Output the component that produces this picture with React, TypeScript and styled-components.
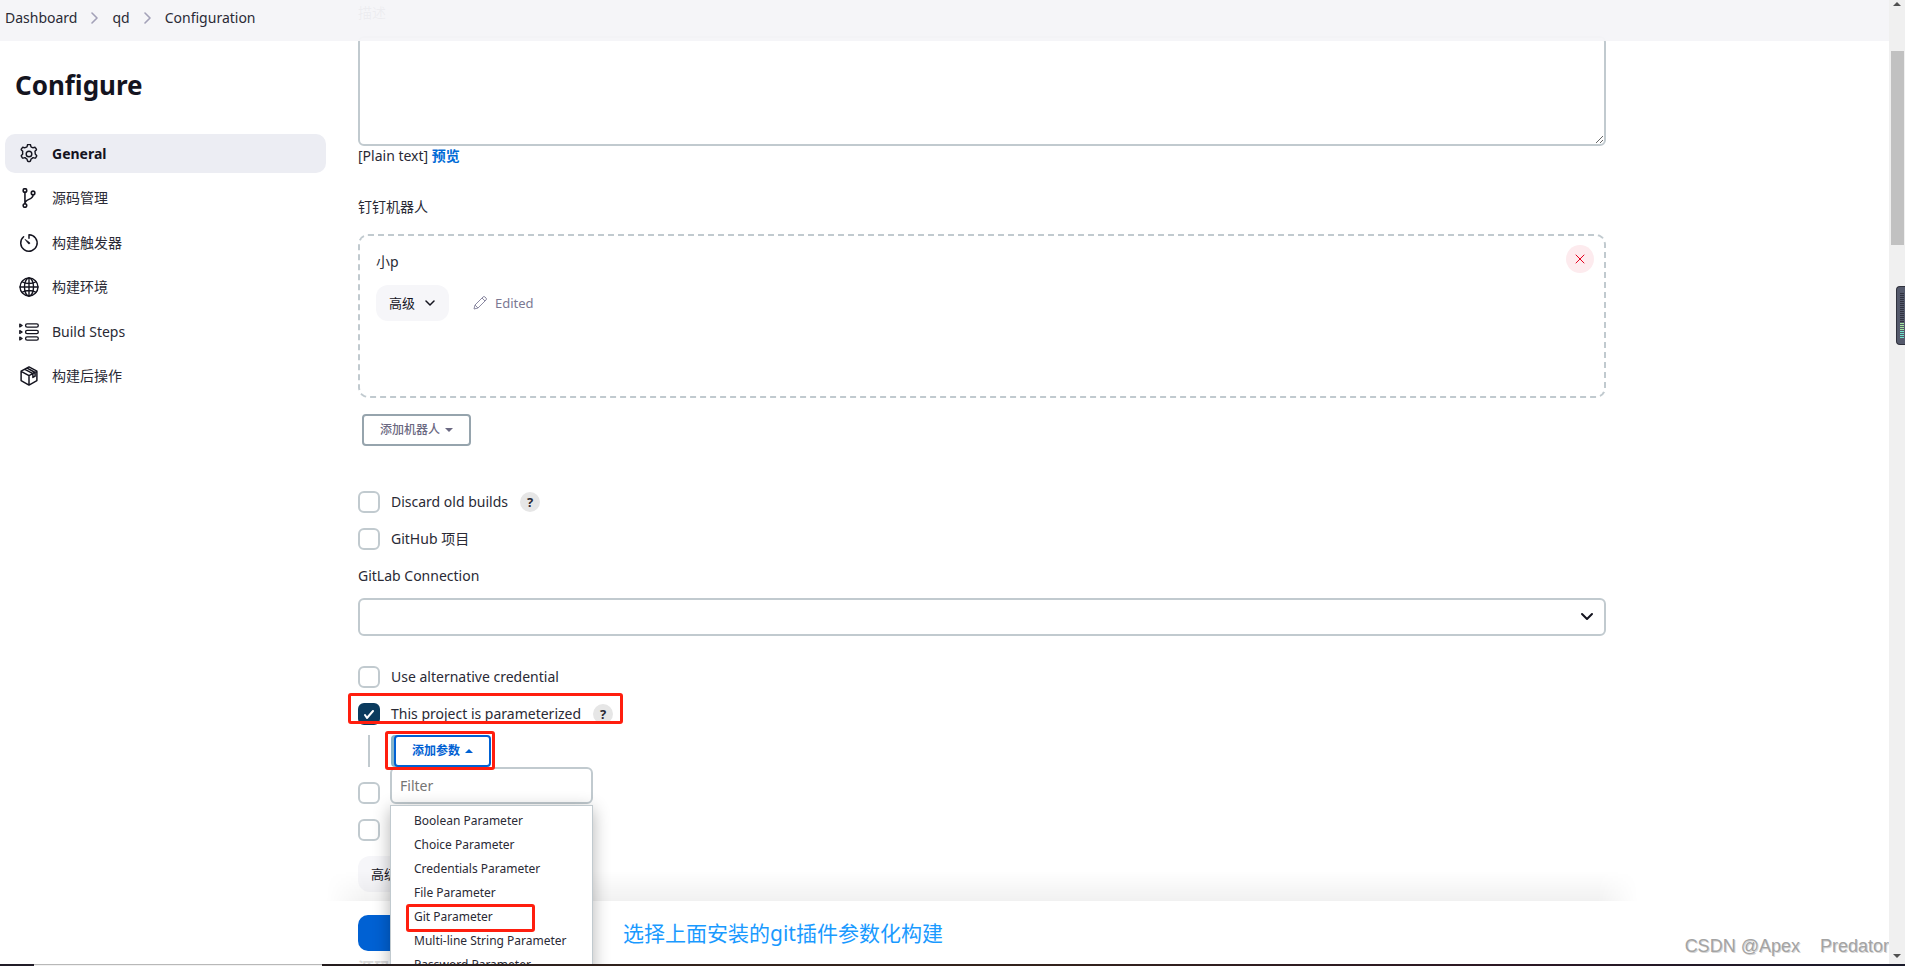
import React from "react";
import styled, { createGlobalStyle, css } from "styled-components";

const ink = "#14141f";
const text = "#2a2a35";
const line = "#c1cacf";

const GlobalStyle = createGlobalStyle`
  *, *::before, *::after { box-sizing: border-box; }
  body {
    margin: 0;
    color: ${text};
    background: #fff;
    font-family: "Noto Sans", "Noto Sans CJK SC", sans-serif;
    font-size: 14px;
    line-height: 22px;
  }
  button, input, select, textarea { font: inherit; color: inherit; margin: 0; }
  a { color: inherit; text-decoration: none; }
`;

const Window = styled.div`
  display: flex;
  flex-direction: column;
  height: 100vh;
  overflow: hidden;
`;
const Body = styled.div`
  display: flex;
  flex: 1;
  min-height: 0;
`;
const Viewport = styled.div`
  position: relative;
  display: flex;
  flex: 1;
  min-width: 0;
  overflow: hidden;
`;

const Header = styled.nav`
  position: absolute;
  z-index: 5;
  inset: 0 0 auto 0;
  height: 41px;
  padding: 0 5px 6px;
  display: flex;
  align-items: center;
  gap: 14px;
  background: rgba(245, 245, 248, 0.96);
  svg { color: #a3a1b8; }
`;

const Sidebar = styled.aside`
  flex: 0 0 326px;
  padding: 66px 0 0 5px;
`;
const Title = styled.h1`
  margin: 0 0 30px 10px;
  font-size: 26px;
  line-height: 38px;
  font-weight: 700;
  color: ${ink};
`;
const Nav = styled.nav`
  display: flex;
  flex-direction: column;
  justify-content: space-between;
  height: 262px;
`;
const NavItem = styled.a<{ $active?: boolean }>`
  display: flex;
  align-items: center;
  gap: 13px;
  height: 39px;
  padding-left: 14px;
  border-radius: 10px;
  ${(p) => p.$active && css`background: #ecedf3; font-weight: 700; color: ${ink};`}
  svg { flex: none; }
`;

const Main = styled.main`
  position: relative;
  flex: 1;
  min-width: 0;
  max-width: 1248px;
  margin: 0 32px;
  padding-top: 2px;
`;
const Label = styled.label`
  display: block;
  height: 22px;
`;
const DescriptionBox = styled.textarea`
  display: block;
  width: 100%;
  height: 110px;
  margin-top: 12px;
  border: 2px solid ${line};
  border-radius: 6px;
  background: #fff;
  outline: none;
  resize: vertical;
`;
const FormatRow = styled.div`
  height: 20px;
  line-height: 20px;
  margin-bottom: 30px;
  a { color: #006bd6; font-weight: 700; }
`;
const RobotCard = styled.section`
  position: relative;
  min-height: 164px;
  margin-top: 16px;
  padding: 16px;
  border: 2px dashed ${line};
  border-radius: 10px;
`;
const RobotName = styled.div`
  height: 20px;
  line-height: 20px;
  margin-bottom: 13px;
`;
const Row = styled.div`
  display: flex;
  align-items: center;
  gap: 24px;
`;
const SoftButton = styled.button`
  display: flex;
  align-items: center;
  gap: 10px;
  height: 36px;
  padding: 0 14px 0 13px;
  border: 0;
  border-radius: 12px;
  background: #f6f6f9;
  font-size: 13px;
  color: ${ink};
`;
const Edited = styled.span`
  display: flex;
  align-items: center;
  gap: 8px;
  color: #7b7993;
  font-size: 13px;
`;
const RemoveButton = styled.button`
  position: absolute;
  top: 9px;
  right: 10px;
  display: grid;
  place-items: center;
  width: 28px;
  height: 28px;
  padding: 0;
  border: 0;
  border-radius: 50%;
  background: #fdebee;
  color: #e6001f;
`;
const OutlineButton = styled.button<{ $open?: boolean }>`
  display: flex;
  align-items: center;
  justify-content: center;
  gap: 5px;
  height: 32px;
  padding: 0 16px;
  border: 2px solid ${(p) => (p.$open ? "#0061d3" : "#96a4ad")};
  border-radius: 4px;
  background: #fff;
  color: ${(p) => (p.$open ? "#0061d3" : "#6b6982")};
  font-size: 12px;
  font-weight: ${(p) => (p.$open ? 600 : 500)};
  ${(p) => p.$open && css`box-shadow: -3px 0 0 #86b4ca;`}
`;
const RobotAction = styled.div`
  display: flex;
  margin: 16px 0 45px 4px;
`;

const CheckRow = styled.div`
  position: relative;
  display: flex;
  align-items: center;
  width: fit-content;
  height: 22px;
  margin-bottom: 15px;
  label { margin-left: 11px; }
`;
const Checkbox = styled.input.attrs({ type: "checkbox" })`
  appearance: none;
  flex: none;
  width: 22px;
  height: 22px;
  border: 2px solid ${line};
  border-radius: 6px;
  background: #fff;
  &:checked {
    border-color: #0b3b5e;
    background: #0b3b5e;
  }
`;
const Tick = styled.svg`
  position: absolute;
  left: 5px;
  top: 6px;
  pointer-events: none;
`;
const Help = styled.button`
  width: 20px;
  height: 20px;
  margin-left: 12px;
  padding: 0;
  border: 0;
  border-radius: 50%;
  background: #e6e6e6;
  font-size: 13px;
  line-height: 20px;
  font-weight: 700;
`;
const SelectWrap = styled.div`
  position: relative;
  margin: 11px 0 30px;
  svg { position: absolute; right: 12px; top: 12px; color: ${ink}; pointer-events: none; }
`;
const Select = styled.select`
  appearance: none;
  display: block;
  width: 100%;
  height: 38px;
  border: 2px solid ${line};
  border-radius: 6px;
  background: #fff;
`;

const ParameterBlock = styled.div`
  display: flex;
  height: 32px;
  margin: -5px 0 15px 10px;
  padding-left: 24px;
  border-left: 2px solid ${line};
`;
const Dropdown = styled.div`
  position: relative;
`;
const Menu = styled.div`
  position: absolute;
  z-index: 3;
  top: 100%;
  left: -4px;
  width: 203px;
`;
const Filter = styled.input`
  display: block;
  width: 100%;
  height: 37px;
  padding: 0 8px;
  border: 2px solid ${line};
  border-radius: 6px;
  background: #fff;
  outline: none;
  &::placeholder { color: #757575; opacity: 1; }
`;
const Options = styled.ul`
  list-style: none;
  margin: 1px 0 0;
  padding: 3px 0;
  border: 1px solid ${line};
  background: #fff;
  box-shadow: 0 4px 16px rgba(0, 0, 0, 0.3);
`;
const Option = styled.li`
  position: relative;
  height: 24px;
  padding-left: 23px;
  font-size: 12px;
  line-height: 24px;
  white-space: nowrap;
`;

const Highlight = styled.span<{ $inset: string }>`
  position: absolute;
  z-index: 4;
  inset: ${(p) => p.$inset};
  border: 3px solid #ff1e0e;
  border-radius: 3px;
  pointer-events: none;
`;

const SaveBar = styled.div`
  position: absolute;
  z-index: 2;
  left: -32px;
  right: -32px;
  bottom: 0;
  height: 63px;
  padding: 14px 32px 0;
  background: #fff;
  &::before {
    content: "";
    position: absolute;
    inset: -30px 0 100% 0;
    background: linear-gradient(to top, rgba(0, 0, 0, 0.055), rgba(0, 0, 0, 0));
    mask-image: linear-gradient(to right, transparent, #000 40px, #000 calc(100% - 40px), transparent);
  }
`;
const SaveRow = styled.div`
  display: flex;
  align-items: center;
  height: 36px;
  margin-bottom: 6px;
`;
const SaveButton = styled.button`
  width: 90px;
  height: 36px;
  margin-right: 175px;
  border: 0;
  border-radius: 10px;
  background: #0061d3;
`;
const Note = styled.span`
  color: #1a9aff;
  font-size: 21px;
  line-height: 36px;
  white-space: nowrap;
`;
const NextHeading = styled.div`
  color: #d8d8d8;
  font-size: 16px;
  font-weight: 700;
`;
const Watermark = styled.div`
  position: absolute;
  z-index: 6;
  right: 0;
  bottom: 7px;
  font-family: "Liberation Sans", sans-serif;
  font-size: 18px;
  color: #a3a3a3;
  text-shadow: 1px 1px 0 #d6d6d6;
  white-space: pre;
`;

const ScrollTrack = styled.div`
  position: relative;
  display: flex;
  flex-direction: column;
  align-items: center;
  justify-content: space-between;
  flex: 0 0 16px;
  padding: 2px 0 6px;
  background: #f0f0f0;
  color: #505050;
`;
const Thumb = styled.div`
  position: absolute;
  top: 51px;
  left: 2px;
  width: 13px;
  height: 194px;
  background: #c1c1c1;
`;
const Meter = styled.div`
  position: absolute;
  top: 286px;
  right: 0;
  width: 9px;
  height: 59px;
  padding: 6px 1px 0 3px;
  border: 1px solid #30323d;
  border-right: 0;
  border-radius: 4px 0 0 4px;
  background: #555a6c;
  overflow: hidden;
`;
const MeterBars = styled.div<{ $color: string; $height: number }>`
  width: 4px;
  height: ${(p) => p.$height}px;
  background: repeating-linear-gradient(${(p) => p.$color} 0 1px, transparent 1px 2px);
`;
const Taskbar = styled.div`
  display: flex;
  flex: none;
  height: 2px;
  background: linear-gradient(to right, #211d28 34px, #241c1e 322px, #33231c 700px, #33231c 1000px, #2c1824 1500px, #191a2a);
`;
const TaskbarField = styled.div`
  width: 288px;
  margin-left: 34px;
  border-top: 1px solid #b8b8b8;
  background: #f2f2f2;
`;

const Chevron = ({ d, w, h, sw = 2 }: { d: string; w: number; h: number; sw?: number }) => (
  <svg width={w} height={h} viewBox={`0 0 ${w} ${h}`} fill="none" stroke="currentColor" strokeWidth={sw} strokeLinecap="round" strokeLinejoin="round">
    <path d={d} />
  </svg>
);
const Crumb = () => <Chevron w={7} h={12} sw={1.6} d="M1 1l5 5-5 5" />;
const Caret = ({ up }: { up?: boolean }) => (
  <svg width="8" height="4" viewBox="0 0 8 4" fill="currentColor">
    <path d={up ? "M0 4l4-4 4 4z" : "M0 0h8l-4 4z"} />
  </svg>
);

const Icon = ({ children, sw = 32 }: { children: React.ReactNode; sw?: number }) => (
  <svg width="20" height="20" viewBox="0 0 512 512" fill="none" stroke={ink} strokeWidth={sw} strokeLinecap="round" strokeLinejoin="round">
    {children}
  </svg>
);
const GearIcon = () => (
  <Icon sw={36}>
    <circle cx="256" cy="256" r="72" />
    <path d="M205 72l12-48q3-12 15-12h48q12 0 15 12l12 48q26 9 47 26l46-14q12-4 18 7l26 42q6 10-2 19l-34 36q8 34 8 68l34 36q8 9 2 19l-26 42q-6 11-18 7l-48-12q-22 24-53 38l-12 48q-3 12-15 12h-48q-12 0-15-12l-12-48q-31-14-53-38l-48 12q-12 4-18-7l-26-42q-6-10 2-19l34-36q-8-34 0-68l-34-36q-8-9-2-19l26-42q6-11 18-7l46 14q21-17 55-26z" />
  </Icon>
);
const BranchIcon = () => (
  <Icon sw={40}>
    <circle cx="152" cy="62" r="46" />
    <circle cx="152" cy="450" r="46" />
    <circle cx="360" cy="126" r="46" />
    <path d="M152 108v296M360 172c0 150-208 90-208 232" />
  </Icon>
);
const TimerIcon = () => (
  <Icon sw={38}>
    <path d="M118 96a210 210 0 10138-50v86" />
    <path fill={ink} d="M160 166l112 78q14 16 0 30t-32 0z" strokeWidth="16" />
  </Icon>
);
const GlobeIcon = () => (
  <Icon sw={36}>
    <circle cx="256" cy="256" r="230" />
    <ellipse cx="256" cy="256" rx="116" ry="230" />
    <path d="M256 26v460M26 256h460M78 122c100 60 256 60 356 0M78 390c100-60 256-60 356 0" />
  </Icon>
);
const StepsIcon = () => (
  <Icon sw={34}>
    <rect x="168" y="50" width="326" height="80" rx="40" />
    <rect x="168" y="216" width="326" height="80" rx="40" />
    <rect x="168" y="382" width="326" height="80" rx="40" />
    <path d="M20 56l60 34-60 34zM20 222l60 34-60 34zM20 388l60 34-60 34z" />
  </Icon>
);
const PackageIcon = () => (
  <Icon sw={38}>
    <path d="M256 24l202 108v240L256 488 54 372V132zM54 140l202 108 202-108M256 248v240M150 84l206 112v96l56-32v-94L208 52" />
  </Icon>
);
const PencilIcon = () => (
  <svg width="14" height="14" viewBox="0 0 14 14" fill="none" stroke="#8d8ba3" strokeLinejoin="round">
    <path d="M1 13l1-4L10 1q1-1 2 0l1 1q1 1 0 2l-8 8zM9 2l3 3M2 9l3 3" />
  </svg>
);

const sections = [
  { name: "General", icon: <GearIcon /> },
  { name: "源码管理", icon: <BranchIcon /> },
  { name: "构建触发器", icon: <TimerIcon /> },
  { name: "构建环境", icon: <GlobeIcon /> },
  { name: "Build Steps", icon: <StepsIcon /> },
  { name: "构建后操作", icon: <PackageIcon /> },
];
const parameters = ["Boolean", "Choice", "Credentials", "File", "Git", "Multi-line String", "Password"];

const AdvancedButton = () => (
  <SoftButton type="button">
    高级
    <Chevron w={10} h={6} sw={1.5} d="M1 1l4 4 4-4" />
  </SoftButton>
);

export default function App() {
  return (
    <Window>
      <GlobalStyle />
      <Body>
        <Viewport>
          <Header aria-label="Breadcrumb">
            <a href="#dashboard">Dashboard</a>
            <Crumb />
            <a href="#qd">qd</a>
            <Crumb />
            <a href="#configuration">Configuration</a>
          </Header>
          <Sidebar>
            <Title>Configure</Title>
            <Nav>
              {sections.map((s, i) => (
                <NavItem key={s.name} href={`#section-${i}`} $active={i === 0}>
                  {s.icon}
                  {s.name}
                </NavItem>
              ))}
            </Nav>
          </Sidebar>
          <Main>
            <Label htmlFor="description">描述</Label>
            <DescriptionBox id="description" />
            <FormatRow>
              [Plain text] <a href="#preview">预览</a>
            </FormatRow>
            <Label as="div">钉钉机器人</Label>
            <RobotCard>
              <RobotName>小p</RobotName>
              <Row>
                <AdvancedButton />
                <Edited>
                  <PencilIcon />
                  Edited
                </Edited>
              </Row>
              <RemoveButton type="button" aria-label="Remove">
                <Chevron w={10} h={10} sw={1} d="M1 1l8 8M9 1l-8 8" />
              </RemoveButton>
            </RobotCard>
            <RobotAction>
              <OutlineButton type="button">
                添加机器人 <Caret />
              </OutlineButton>
            </RobotAction>
            <CheckRow>
              <Checkbox id="discard" />
              <label htmlFor="discard">Discard old builds</label>
              <Help type="button">?</Help>
            </CheckRow>
            <CheckRow>
              <Checkbox id="github" />
              <label htmlFor="github">GitHub 项目</label>
            </CheckRow>
            <Label htmlFor="gitlab">GitLab Connection</Label>
            <SelectWrap>
              <Select id="gitlab" />
              <Chevron w={14} h={14} d="M2 4l5 5 5-5" />
            </SelectWrap>
            <CheckRow>
              <Checkbox id="credential" />
              <label htmlFor="credential">Use alternative credential</label>
            </CheckRow>
            <CheckRow>
              <Checkbox id="parameterized" defaultChecked />
              <Tick width="12" height="10" viewBox="0 0 12 10" fill="none" stroke="#fff" strokeWidth="2" strokeLinecap="round" strokeLinejoin="round">
                <path d="M2 6l2 3 6-7" />
              </Tick>
              <label htmlFor="parameterized">This project is parameterized</label>
              <Help type="button">?</Help>
              <Highlight $inset="-10px -10px 1px -10px" />
            </CheckRow>
            <ParameterBlock>
              <Dropdown>
                <OutlineButton type="button" $open>
                  添加参数 <Caret up />
                </OutlineButton>
                <Highlight $inset="-4px -4px -3px -9px" />
                <Menu>
                  <Filter placeholder="Filter" aria-label="Filter" />
                  <Options>
                    {parameters.map((p) => (
                      <Option key={p}>
                        {p} Parameter
                        {p === "Git" && <Highlight $inset="-1px 57px -3px 15px" />}
                      </Option>
                    ))}
                  </Options>
                </Menu>
              </Dropdown>
            </ParameterBlock>
            <CheckRow>
              <Checkbox aria-label="Throttle builds" />
            </CheckRow>
            <CheckRow>
              <Checkbox aria-label="Execute concurrent builds" />
            </CheckRow>
            <AdvancedButton />
            <SaveBar>
              <SaveRow>
                <SaveButton type="button" aria-label="Save" />
                <Note>选择上面安装的git插件参数化构建</Note>
              </SaveRow>
              <NextHeading>源码管理</NextHeading>
            </SaveBar>
          </Main>
          <Watermark>CSDN @Apex{"    "}Predator</Watermark>
        </Viewport>
        <ScrollTrack>
          <Caret up />
          <Thumb />
          <Meter>
            <MeterBars $color="#30323f" $height={30} />
            <MeterBars $color="#a4e8a0" $height={8} />
            <MeterBars $color="#6fe3cb" $height={8} />
          </Meter>
          <Caret />
        </ScrollTrack>
      </Body>
      <Taskbar>
        <TaskbarField />
      </Taskbar>
    </Window>
  );
}
